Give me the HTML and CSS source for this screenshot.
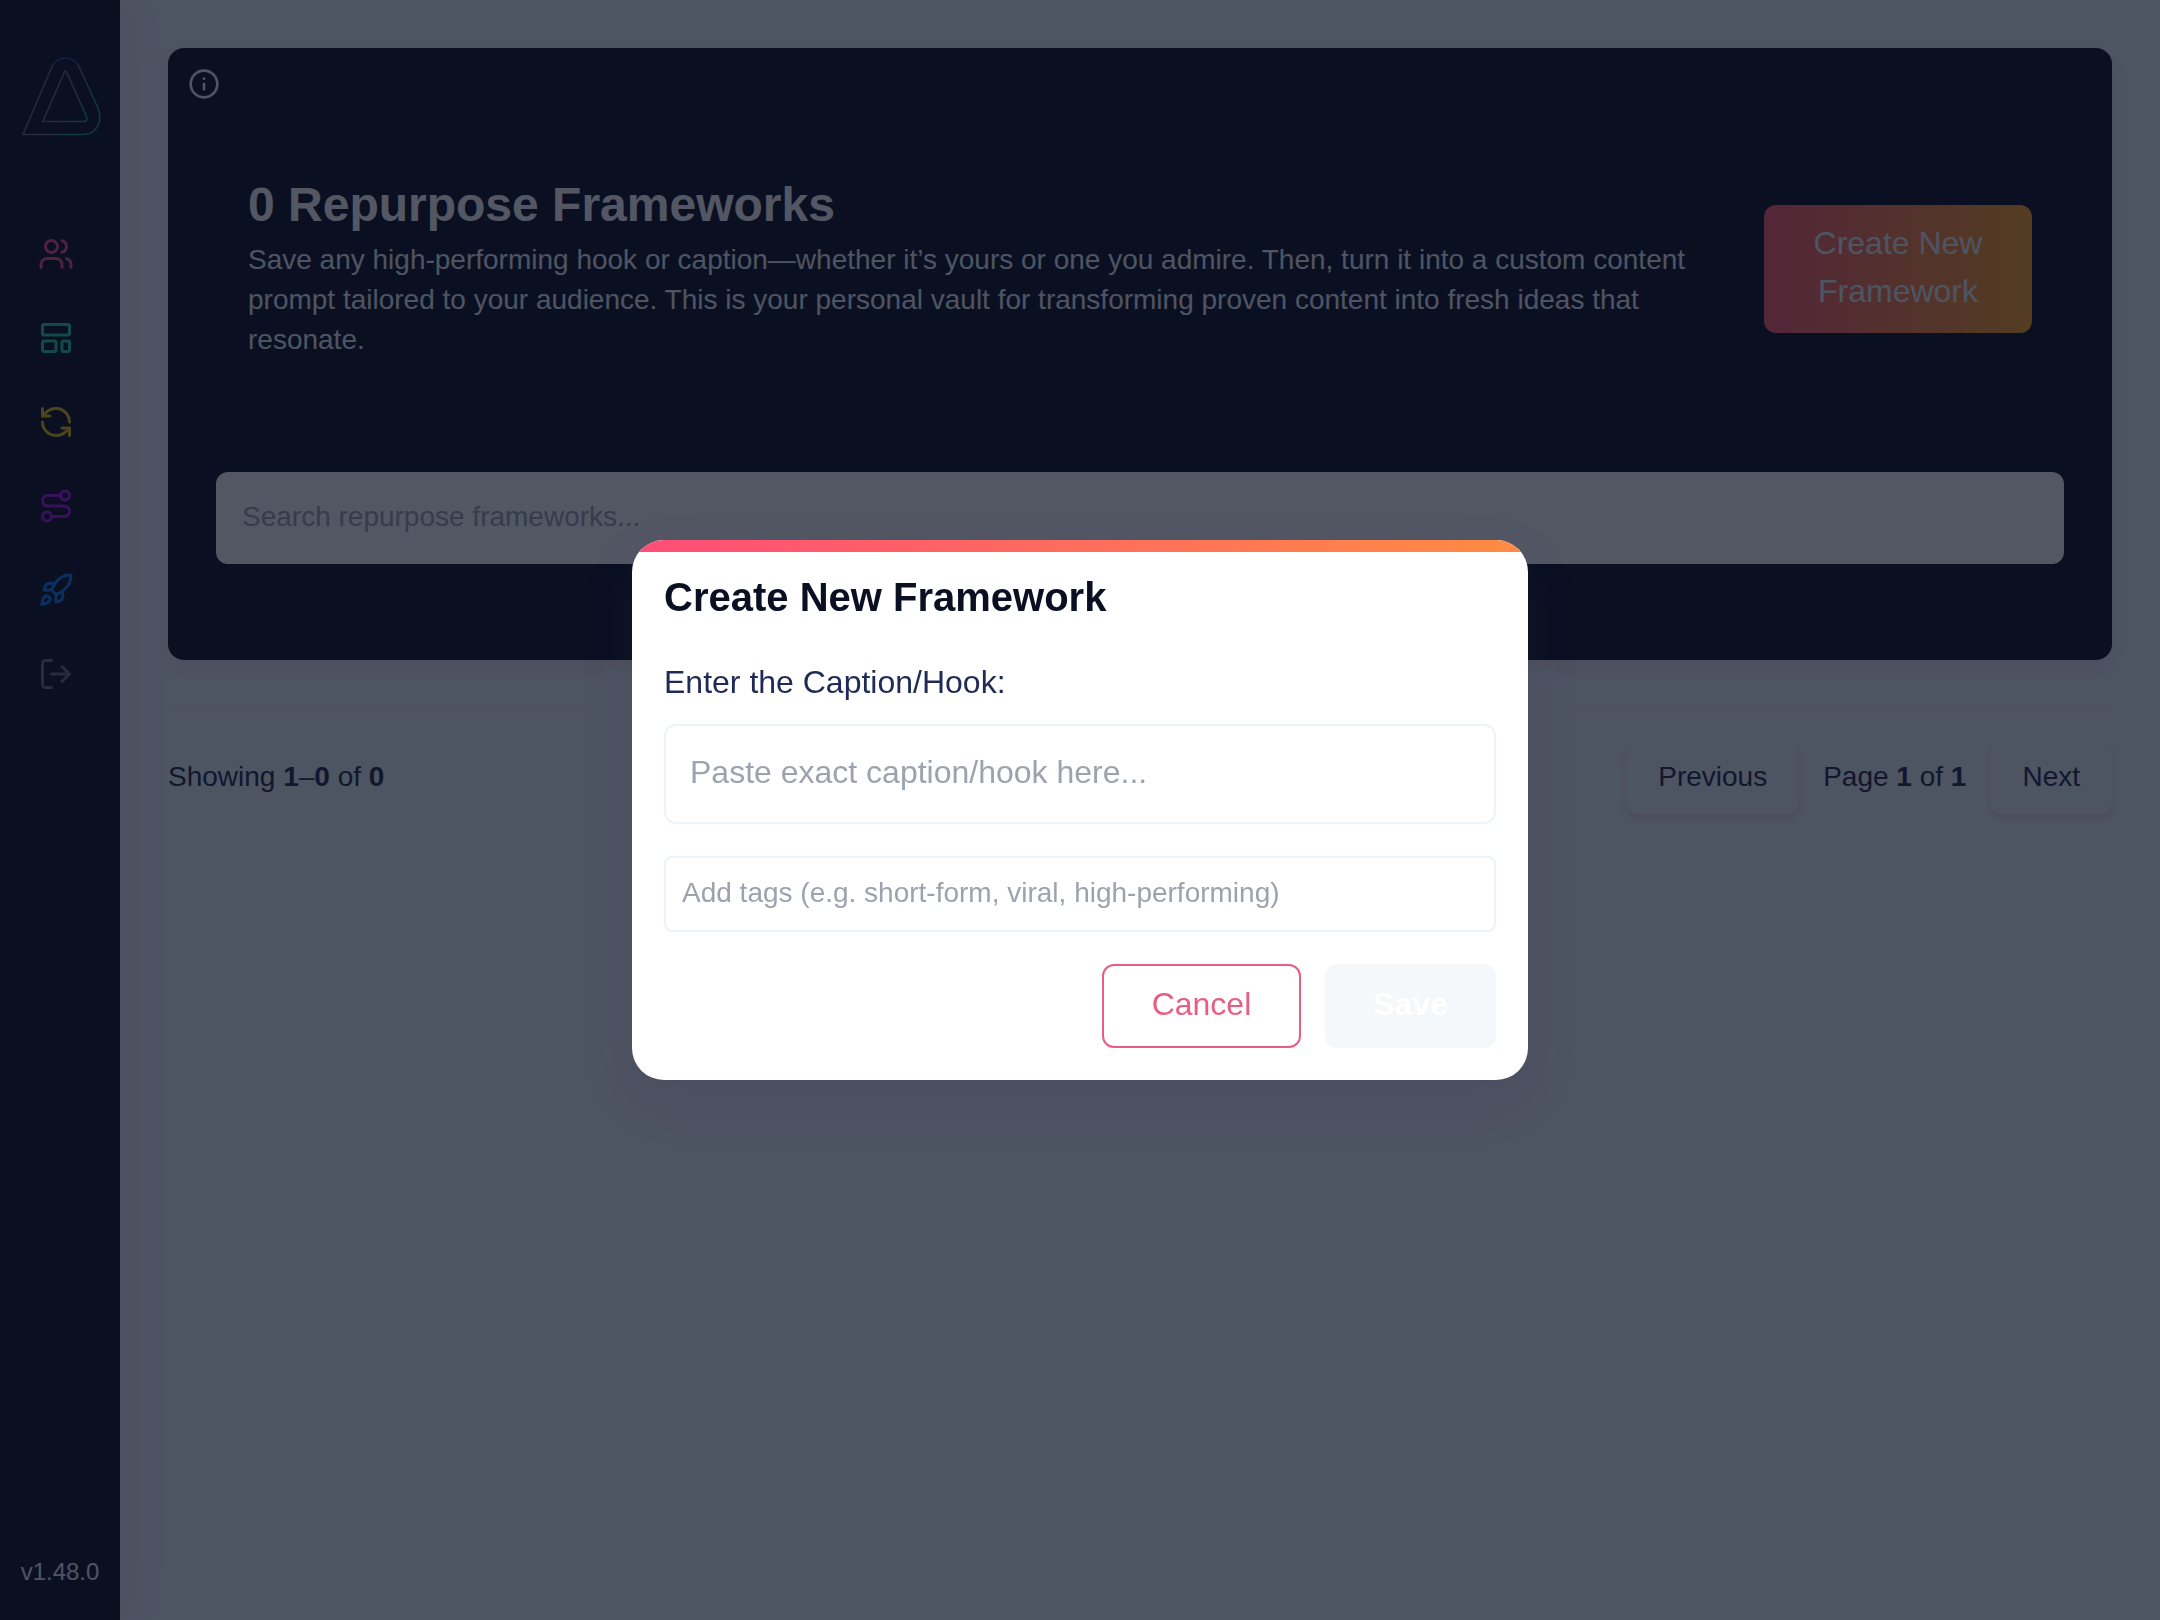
FILE: index.html
```html
<!DOCTYPE html>
<html lang="en">
<head>
<meta charset="utf-8">
<meta name="viewport" content="width=device-width, initial-scale=1">
<title>Repurpose Frameworks</title>
<link rel="stylesheet" href="styles.css">
</head>
<body>
<div class="app">
  <aside class="sidebar">
    <a class="logo" href="#" aria-label="Home">
      <svg viewBox="0 0 80 80" fill="none" stroke="url(#logo-stroke)" stroke-width="1.500">
        <defs>
          <linearGradient id="logo-stroke" gradientUnits="userSpaceOnUse" x1="20" y1="30" x2="70" y2="62">
            <stop offset="0" stop-color="#80607d"/>
            <stop offset="0.55" stop-color="#7c6078"/>
            <stop offset="0.85" stop-color="#16a08c"/>
            <stop offset="1" stop-color="#16a08c"/>
          </linearGradient>
        </defs>
        <path d="M32.500 9.500L3 78.500H64C76 78.500 84 65 77.500 51L58 8.500"/>
        <path d="M22.800 65.500L44.200 16.500Q45.500 13.500 46.800 16.500L66.500 60.500Q68 65.500 63.500 65.500Z"/>
        <path d="M32.500 9.500C38 0 52 0 58 8.500" stroke="#1d4fa8"/>
      </svg>
    </a>
    <nav class="nav" aria-label="Main">
      <a class="nav-link nav-pink" href="#" aria-label="Audience"><svg class="icon" viewBox="0 0 24 24"><path d="M16 21v-2a4 4 0 0 0-4-4H6a4 4 0 0 0-4 4v2"/><circle cx="9" cy="7" r="4"/><path d="M22 21v-2a4 4 0 0 0-3-3.870"/><path d="M16 3.130a4 4 0 0 1 0 7.750"/></svg></a>
      <a class="nav-link nav-teal" href="#" aria-label="Templates"><svg class="icon" viewBox="0 0 24 24"><rect width="18" height="7" x="3" y="3" rx="1"/><rect width="9" height="7" x="3" y="14" rx="1"/><rect width="5" height="7" x="16" y="14" rx="1"/></svg></a>
      <a class="nav-link nav-yellow" href="#" aria-label="Repurpose"><svg class="icon" viewBox="0 0 24 24"><path d="M21 12a9 9 0 0 0-9-9 9.750 9.750 0 0 0-6.740 2.740L3 8"/><path d="M3 3v5h5"/><path d="M3 12a9 9 0 0 0 9 9 9.750 9.750 0 0 0 6.740-2.740L21 16"/><path d="M16 16h5v5"/></svg></a>
      <a class="nav-link nav-purple" href="#" aria-label="Journey"><svg class="icon" viewBox="0 0 24 24"><circle cx="6" cy="19" r="3"/><path d="M9 19h8.500a3.500 3.500 0 0 0 0-7h-11a3.500 3.500 0 0 1 0-7H15"/><circle cx="18" cy="5" r="3"/></svg></a>
      <a class="nav-link nav-blue" href="#" aria-label="Launch"><svg class="icon" viewBox="0 0 24 24"><path d="M4.500 16.500c-1.500 1.260-2 5-2 5s3.740-.5 5-2c.71-.84.7-2.130-.09-2.910a2.180 2.180 0 0 0-2.910-.09z"/><path d="m12 15-3-3a22 22 0 0 1 2-3.950A12.880 12.880 0 0 1 22 2c0 2.720-.78 7.500-6 11a22.350 22.350 0 0 1-4 2z"/><path d="M9 12H4s.55-3.030 2-4c1.620-1.080 5 0 5 0"/><path d="M12 15v5s3.030-.55 4-2c1.080-1.620 0-5 0-5"/></svg></a>
      <a class="nav-link nav-gray" href="#" aria-label="Log out"><svg class="icon" viewBox="0 0 24 24"><path d="M9 21H5a2 2 0 0 1-2-2V5a2 2 0 0 1 2-2h4"/><path d="m16 17 5-5-5-5"/><path d="M21 12H9"/></svg></a>
    </nav>
    <span class="version">v1.48.0</span>
  </aside>

  <main class="main">
    <section class="hero">
      <button class="info" type="button" aria-label="About this page"><svg class="info-icon" viewBox="0 0 24 24"><circle cx="12" cy="12" r="10"/><path d="M12 16v-4"/><path d="M12 8h.01"/></svg></button>
      <header class="hero-head">
        <div class="hero-copy">
          <h1 class="hero-title">0 Repurpose Frameworks</h1>
          <p class="hero-text">Save any high-performing hook or caption—whether it’s yours or one you admire. Then, turn it into a custom content prompt tailored to your audience. This is your personal vault for transforming proven content into fresh ideas that resonate.</p>
        </div>
        <button class="create" type="button">Create New Framework</button>
      </header>
      <input class="search" type="search" placeholder="Search repurpose frameworks..." aria-label="Search repurpose frameworks">
    </section>

    <footer class="pager">
      <p class="pager-text">Showing <strong>1</strong>–<strong>0</strong> of <strong>0</strong></p>
      <div class="pager-controls">
        <button class="pager-button" type="button">Previous</button>
        <p class="pager-text">Page <strong>1</strong> of <strong>1</strong></p>
        <button class="pager-button" type="button">Next</button>
      </div>
    </footer>
  </main>
</div>

<div class="overlay">
  <div class="modal" role="dialog" aria-modal="true" aria-labelledby="modal-title">
    <div class="modal-accent"></div>
    <form class="modal-body">
      <h2 class="modal-title" id="modal-title">Create New Framework</h2>
      <div class="field">
        <label class="field-label" for="caption">Enter the Caption/Hook:</label>
        <textarea class="caption" id="caption" rows="1" placeholder="Paste exact caption/hook here..."></textarea>
      </div>
      <input class="tags" type="text" placeholder="Add tags (e.g. short-form, viral, high-performing)" aria-label="Tags">
      <div class="actions">
        <button class="action cancel" type="button">Cancel</button>
        <button class="action save" type="submit" disabled>Save</button>
      </div>
    </form>
  </div>
</div>
</body>
</html>
```
FILE: styles.css
```css
:root {
  --navy: #0a0f22;
  --indigo: #1f2a56;
  --ink: #262a48;
  --mist: #ecf4f9;
  --placeholder: #9ca3af;
  --pink: #e85d82;
}

*, *::before, *::after {
  box-sizing: border-box;
}

body {
  margin: 0;
  background: var(--mist);
  color: var(--indigo);
  font-family: "Liberation Sans", Arial, Helvetica, sans-serif;
  font-size: 28px;
  line-height: 40px;
}

h1, h2, p {
  margin: 0;
}

button, input, textarea {
  margin: 0;
  font: inherit;
}

::placeholder {
  color: var(--placeholder);
  opacity: 1;
}

.app {
  display: flex;
  min-height: 100vh;
}

/* Sidebar */
.sidebar {
  display: flex;
  flex: 0 0 120px;
  flex-direction: column;
  padding: 56px 0 30px;
  background: var(--navy);
  box-shadow: 0 0 60px rgba(232, 60, 110, 0.1);
}

.logo {
  width: 80px;
  height: 80px;
  margin: 0 auto 100px;
}

.logo svg {
  display: block;
  overflow: visible;
}

.nav {
  display: flex;
  flex-direction: column;
  gap: 48px;
  padding-left: 38px;
}

.nav-link {
  display: block;
  width: 36px;
  height: 36px;
}

.icon, .info-icon {
  display: block;
  width: 100%;
  height: 100%;
  fill: none;
  stroke: currentColor;
  stroke-width: 2;
  stroke-linecap: round;
  stroke-linejoin: round;
}

.nav-pink { color: #f04d80; }
.nav-teal { color: #22d3a5; }
.nav-yellow { color: #e8c010; }
.nav-purple { color: #b010e8; }
.nav-blue { color: #0f7cf0; }
.nav-gray { color: #6a7083; }

.version {
  margin-top: auto;
  color: var(--mist);
  font-size: 24px;
  line-height: 36px;
  text-align: center;
}

/* Page content */
.main {
  flex: 1;
  min-width: 0;
  padding: 48px;
}

.hero {
  position: relative;
  padding: 130px 48px 96px;
  border-radius: 16px;
  background: var(--navy);
  box-shadow: 0 8px 16px rgba(232, 60, 110, 0.1);
}

.info {
  position: absolute;
  top: 20px;
  left: 20px;
  width: 32px;
  height: 32px;
  padding: 0;
  border: 0;
  background: none;
  color: var(--mist);
}

.hero-head {
  display: flex;
  align-items: center;
  gap: 48px;
  padding: 0 32px;
  margin-bottom: 112px;
}

.hero-copy {
  flex: 1;
}

.hero-title {
  margin-bottom: 8px;
  color: #fff;
  font-size: 48px;
  line-height: 54px;
}

.hero-text {
  color: var(--mist);
}

.create {
  flex: 0 0 268px;
  padding: 14px 48px 18px;
  border: 0;
  border-radius: 12px;
  background: linear-gradient(90deg, #ff5c6c, #ffa520);
  color: var(--mist);
  font-size: 32px;
  line-height: 48px;
}

.search {
  display: block;
  width: 100%;
  height: 92px;
  padding: 0 26px 2px;
  border: 0;
  border-radius: 12px;
  background: #fff;
  appearance: none;
}

.pager {
  display: flex;
  align-items: center;
  justify-content: space-between;
  margin-top: 48px;
  padding-top: 32px;
  border-top: 2px solid #f4ecf4;
  color: var(--ink);
}

.pager-controls {
  display: flex;
  align-items: center;
  gap: 24px;
}

.pager-text {
  padding-bottom: 2px;
}

.pager-button {
  padding: 15px 32px 17px;
  border: 0;
  border-radius: 12px;
  background: var(--mist);
  box-shadow: 0 4px 6px rgba(200, 50, 100, 0.14);
  color: inherit;
}

/* Create dialog */
.overlay {
  position: fixed;
  inset: 0;
  display: flex;
  align-items: center;
  justify-content: center;
  padding: 32px;
  background: rgba(10, 15, 34, 0.7);
}

.modal {
  width: 100%;
  max-width: 896px;
  overflow: hidden;
  border-radius: 32px;
  background: #fff;
  box-shadow: 0 20px 50px rgba(70, 50, 80, 0.16);
}

.modal-accent {
  height: 12px;
  background: linear-gradient(90deg, #ff4d78, #ff8c42);
}

.modal-body {
  display: flex;
  flex-direction: column;
  gap: 32px;
  padding: 16px 32px 32px;
}

.modal-title {
  color: var(--navy);
  font-size: 40px;
  line-height: 58px;
}

.field {
  display: flex;
  flex-direction: column;
  gap: 18px;
}

.field-label {
  font-size: 32px;
  line-height: 48px;
}

.caption, .tags {
  width: 100%;
  border: 2px solid var(--mist);
  background: #fff;
  color: var(--indigo);
}

.caption {
  height: 100px;
  padding: 22px 24px;
  border-radius: 12px;
  font-size: 32px;
  line-height: 48px;
  resize: none;
}

.tags {
  height: 76px;
  padding: 0 16px 2px;
  border-radius: 8px;
}

.actions {
  display: flex;
  justify-content: flex-end;
  gap: 24px;
}

.action {
  padding: 16px 48px 20px;
  border: 0;
  border-radius: 12px;
  font-size: 32px;
  line-height: 48px;
}

.cancel {
  padding: 14px 48px 18px;
  border: 2px solid var(--pink);
  background: #fff;
  color: var(--pink);
}

.save {
  background: #f4f8fb;
  color: #fff;
  font-weight: 700;
}
```
